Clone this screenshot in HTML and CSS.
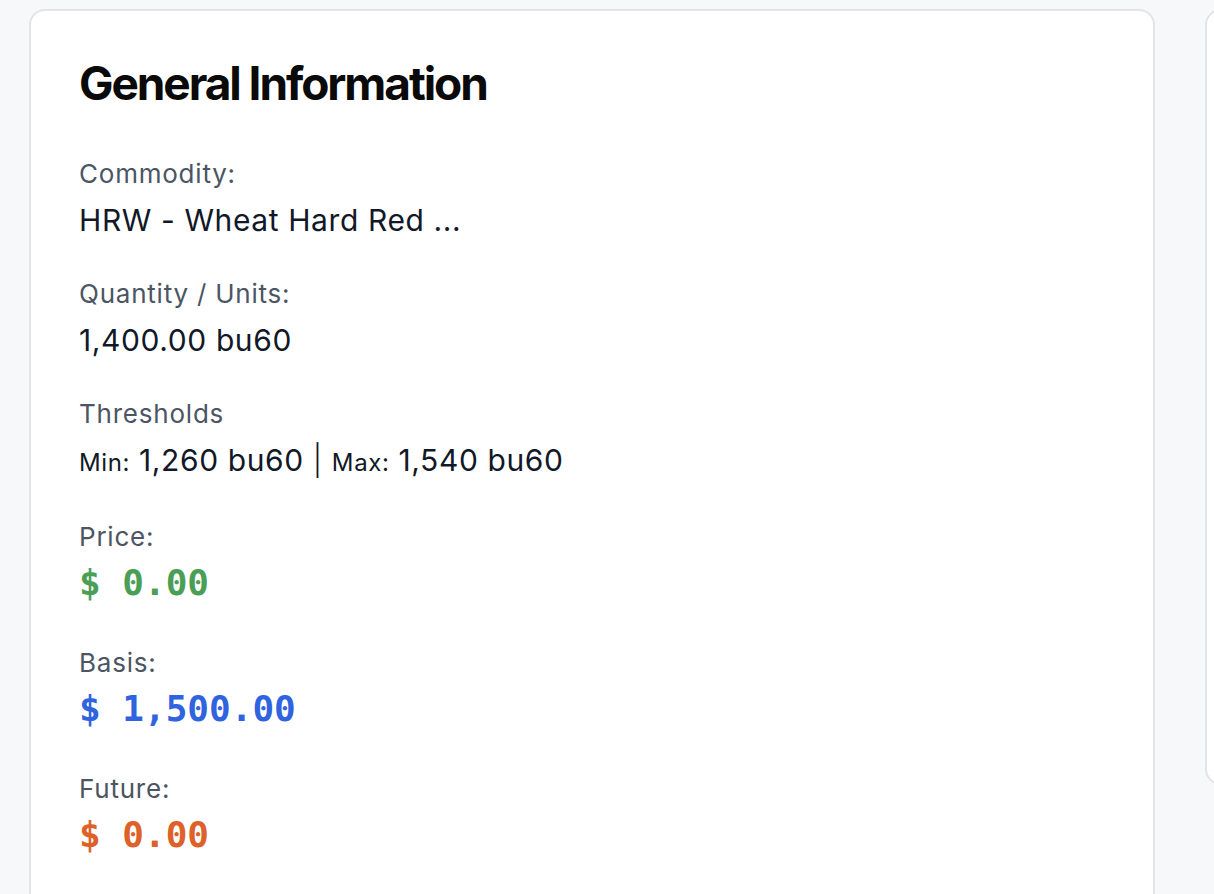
FILE: index.html
```html
<!DOCTYPE html>
<html>
<head>
<meta charset="utf-8">
<link rel="stylesheet" href="styles.css">
</head>
<body>
<div class="page">
  <section class="card">
    <h1 class="title">General Information</h1>
    <div class="field">
      <div class="label">Commodity:</div>
      <div class="value">HRW - Wheat Hard Red ...</div>
    </div>
    <div class="field">
      <div class="label">Quantity / Units:</div>
      <div class="value">1,400.00 bu60</div>
    </div>
    <div class="field">
      <div class="label">Thresholds</div>
      <div class="value"><span class="small">Min:</span> 1,260 bu60 <span class="pipe">|</span> <span class="small">Max:</span> 1,540 bu60</div>
    </div>
    <div class="field field-money">
      <div class="label">Price:</div>
      <div class="money green">$ 0.00</div>
    </div>
    <div class="field field-money">
      <div class="label">Basis:</div>
      <div class="money blue">$ 1,500.00</div>
    </div>
    <div class="field field-money">
      <div class="label">Future:</div>
      <div class="money orange">$ 0.00</div>
    </div>
  </section>
  <section class="card card-side"></section>
</div>
</body>
</html>
```

FILE: styles.css
```css
html, body {
  margin: 0;
  padding: 0;
  background: #f7f8fa;
  overflow: hidden;
}
body {
  width: 1214px;
  height: 894px;
  font-family: Inter, "Noto Sans", sans-serif;
}
.page {
  display: grid;
  grid-template-columns: 1126px 400px;
  column-gap: 50px;
  align-items: start;
  padding: 9px 0 0 29px;
}
.card {
  background: #ffffff;
  border: 2px solid #e4e4e6;
  border-radius: 16px;
  padding: 48px 48px 40px 48px;
  min-height: 900px;
  box-sizing: border-box;
}
.card-side {
  min-height: 0;
  height: 776px;
}
.title {
  margin: 0 0 49px 0;
  font-size: 46px;
  line-height: 48px;
  font-weight: 700;
  letter-spacing: -0.045em;
  color: #0a0a0a;
}
.field {
  margin-bottom: 36px;
}
.field-money {
  margin-bottom: 42px;
}
.label {
  font-size: 26px;
  line-height: 36px;
  letter-spacing: 0.03em;
  color: #4b5563;
  margin-bottom: 8px;
}
.value {
  font-size: 30px;
  line-height: 40px;
  letter-spacing: 0.02em;
  color: #111827;
}
.small {
  font-size: 24px;
}
.pipe {
  font-weight: 300;
}
.money {
  font-family: "DejaVu Sans Mono", monospace;
  font-weight: 700;
  font-size: 36px;
  line-height: 40px;
  letter-spacing: 0;
}
.green { color: #4a9e55; }
.blue { color: #2f63e0; }
.orange { color: #dd6128; }
```
